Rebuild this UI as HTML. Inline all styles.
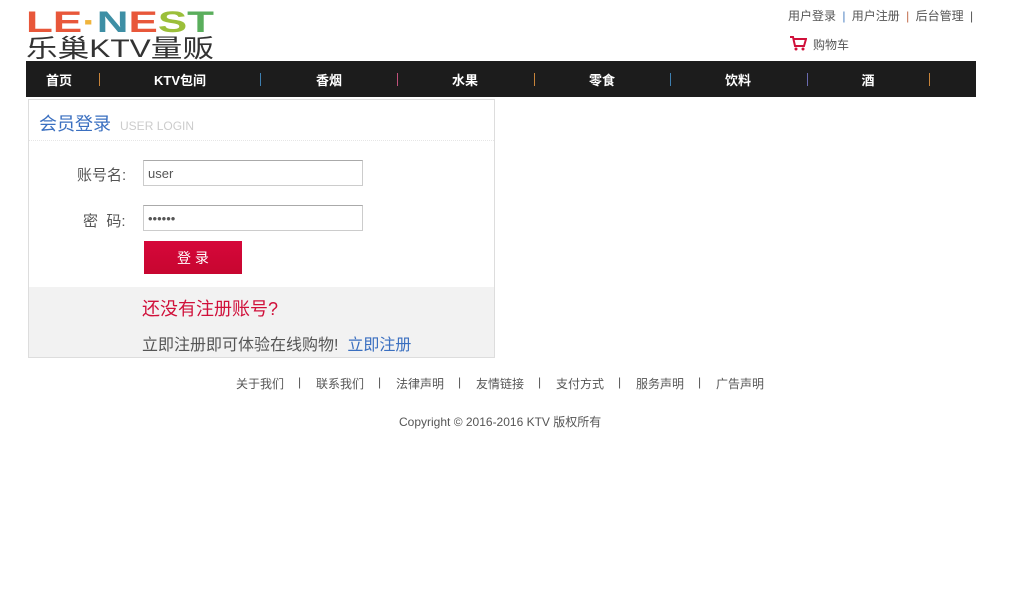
<!DOCTYPE html>
<html><head><meta charset="utf-8"><style>
*{margin:0;padding:0;box-sizing:border-box}
body{width:1028px;height:590px;background:#fff;font-family:"Liberation Sans","Noto Sans CJK SC",sans-serif;position:relative;overflow:hidden;color:#555}
.a{position:absolute;white-space:nowrap}
.nav{position:absolute;left:26px;top:61px;width:950px;height:36px;background:#1c1c1c}
.nav span{position:absolute;top:9px;font-size:13px;color:#fff;font-weight:bold;transform:translateX(-50%)}
.nav i{position:absolute;top:12px;width:1px;height:13px}
.box{position:absolute;left:28px;top:99px;width:467px;height:259px;border:1px solid #ddd}
input{position:absolute;border:1px solid #ccc;border-top-color:#aaa;height:26px;width:220px;font-size:13px;padding-left:4px;color:#555;font-family:inherit}
.f{position:absolute;top:375px;font-size:12px;color:#555;white-space:nowrap}
</style></head><body>
<svg class="a" style="left:26px;top:8px" width="190" height="54" viewBox="0 0 190 54">
<text x="0" y="24" font-size="30" font-weight="900" font-family="Liberation Sans,sans-serif" textLength="188" lengthAdjust="spacingAndGlyphs"><tspan fill="#e8573a">LE</tspan><tspan fill="#f0b43b">·</tspan><tspan fill="#3e8fa5">N</tspan><tspan fill="#e8573a">E</tspan><tspan fill="#9bbf3a">S</tspan><tspan fill="#5aae5c">T</tspan></text>
<text x="0" y="49" font-size="25" fill="#333" font-family="Liberation Sans,Noto Sans CJK SC,sans-serif" textLength="188" lengthAdjust="spacingAndGlyphs">乐巢KTV量贩</text>
</svg>
<div class="a" style="left:788px;top:7px;font-size:12px;color:#555;word-spacing:3px">用户登录 <span style="color:#4a7fc0">|</span> 用户注册 <span style="color:#c06a4a">|</span> 后台管理 <span>|</span></div>
<svg class="a" style="left:789px;top:35px" width="18" height="16" viewBox="0 0 18 16"><path d="M1 2h3l2 9h9l2-7H5" fill="none" stroke="#d0103a" stroke-width="2"/><circle cx="7" cy="14" r="1.5" fill="#d0103a"/><circle cx="14" cy="14" r="1.5" fill="#d0103a"/></svg>
<div class="a" style="left:813px;top:36px;font-size:12px;color:#555">购物车</div>
<div class="nav">
<span style="left:33px">首页</span><i style="left:73px;background:#c8843a"></i>
<span style="left:154px">KTV包间</span><i style="left:234px;background:#3e7fb0"></i>
<span style="left:303px">香烟</span><i style="left:371px;background:#c0507a"></i>
<span style="left:439px">水果</span><i style="left:508px;background:#c8843a"></i>
<span style="left:576px">零食</span><i style="left:644px;background:#3e7fb0"></i>
<span style="left:712px">饮料</span><i style="left:781px;background:#6a6ab0"></i>
<span style="left:842px">酒</span><i style="left:903px;background:#c8843a"></i>
</div>
<div class="box">
<div class="a" style="left:10px;top:10px;font-size:18px;color:#3a6fc0">会员登录 <span style="font-size:12px;color:#ccc;margin-left:4px">USER LOGIN</span></div>
<div class="a" style="left:0;top:40px;width:465px;border-top:1px dotted #e6e6e6"></div>
<div class="a" style="left:48px;top:64px;font-size:15px;color:#555">账号名:</div>
<input style="left:114px;top:60px" value="user">
<div class="a" style="left:54px;top:110px;font-size:15px;color:#555">密 &nbsp;码:</div>
<input style="left:114px;top:105px" value="••••••">
<div class="a" style="left:115px;top:141px;width:98px;height:33px;background:linear-gradient(#d6073a,#c70630);color:#fff;font-size:14px;text-align:center;line-height:34px">登 录</div>
<div class="a" style="left:0;top:187px;width:465px;height:70px;background:#f2f2f2"></div>
<div class="a" style="left:113px;top:195px;font-size:18px;color:#d0103a">还没有注册账号?</div>
<div class="a" style="left:113px;top:231px;font-size:16px;color:#555">立即注册即可体验在线购物! &nbsp;<span style="color:#3a6fc0">立即注册</span></div>
</div>
<span class="f" style="left:236px">关于我们</span><span class="f" style="left:298px">|</span>
<span class="f" style="left:316px">联系我们</span><span class="f" style="left:378px">|</span>
<span class="f" style="left:396px">法律声明</span><span class="f" style="left:458px">|</span>
<span class="f" style="left:476px">友情链接</span><span class="f" style="left:538px">|</span>
<span class="f" style="left:556px">支付方式</span><span class="f" style="left:618px">|</span>
<span class="f" style="left:636px">服务声明</span><span class="f" style="left:698px">|</span>
<span class="f" style="left:716px">广告声明</span>
<div class="a" style="left:399px;top:413px;font-size:12px;color:#555">Copyright © 2016-2016 KTV 版权所有</div>
</body></html>
